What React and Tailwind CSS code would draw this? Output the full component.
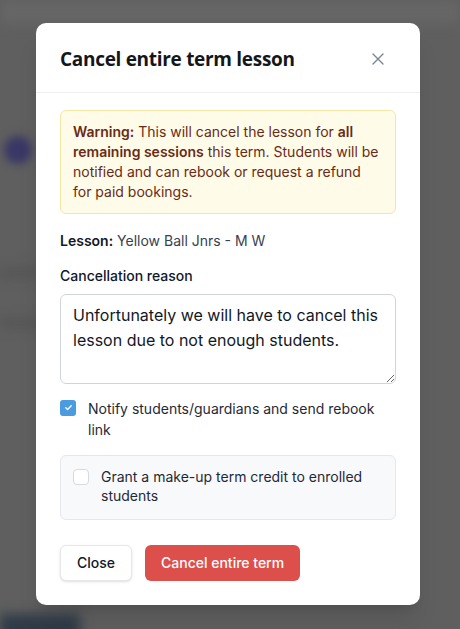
import React, { useState } from "react";

const Backdrop = () => (
  <div className="absolute inset-0 overflow-hidden bg-[#5f5f5f]">
    <div className="h-[24px] bg-[#666666] blur-[6px]" />
    <div className="absolute left-[4px] top-[136px] h-[28px] w-[28px] rounded-full bg-[#3a3766] blur-[4px]" />
    <div className="absolute left-0 top-[268px] h-[10px] w-[40px] bg-[#555555] blur-[6px]" />
    <div className="absolute left-0 top-[318px] h-[10px] w-[40px] bg-[#555555] blur-[6px]" />
    <div className="absolute left-0 top-[614px] h-[30px] w-[80px] bg-[#2f3b48] blur-[6px]" />
  </div>
);

export default function App() {
  const [reason, setReason] = useState(
    "Unfortunately we will have to cancel this lesson due to not enough students."
  );
  const [notify, setNotify] = useState(true);
  const [credit, setCredit] = useState(false);

  return (
    <div className="relative h-[629px] w-[460px] overflow-hidden font-['Inter',sans-serif]">
      <Backdrop />
      <div className="relative flex pl-[36px] pt-[23px]">
        <div className="w-[384px] rounded-[10px] bg-white shadow-xl">
          {/* Header */}
          <div className="flex items-center justify-between border-b border-[#f0f0f0] pl-[24px] pr-[36px] pt-[22px] pb-[18px]">
            <h2 className="text-[19px] font-bold tracking-[-0.3px] text-[#15161a] font-['Open_Sans',sans-serif]">
              Cancel entire term lesson
            </h2>
            <button className="text-[#7a8494]">
              <svg width="12" height="12" viewBox="0 0 12 12" fill="none" stroke="currentColor" strokeWidth="1.4" strokeLinecap="round">
                <path d="M1 1l10 10M11 1L1 11" />
              </svg>
            </button>
          </div>

          {/* Body */}
          <div className="px-[24px] pt-[17px] pb-[24px]">
            <div className="rounded-[6px] border border-[#f6e6a6] bg-[#fefbe9] px-[12px] py-[11px] text-[14px] leading-[20px] text-[#6b2a14]">
              <b className="font-semibold">Warning:</b> This will cancel the lesson for{" "}
              <b className="font-semibold">all remaining sessions</b> this term. Students will be notified and can rebook or request a refund for paid bookings.
            </div>

            <p className="mt-[17px] text-[14px] leading-[20px] text-[#374151]">
              <span className="font-semibold text-[#111827]">Lesson:</span> Yellow Ball Jnrs - M W
            </p>

            <label className="mt-[15px] block text-[14px] font-medium leading-[20px] text-[#111827]">
              Cancellation reason
            </label>
            <textarea
              value={reason}
              onChange={(e) => setReason(e.target.value)}
              className="mt-[8px] block h-[90px] w-full resize-y rounded-[6px] border border-[#d1d5db] px-[12px] py-[8px] text-[16px] leading-[25px] text-[#111827] outline-none"
            />

            <label className="mt-[14px] flex items-start gap-[12px] text-[14px] leading-[21px] text-[#1f2937]">
              <span
                onClick={() => setNotify(!notify)}
                className={`mt-[2px] flex h-[16px] w-[16px] shrink-0 items-center justify-center rounded-[3px] ${notify ? "bg-[#4a9be0]" : "border border-[#d1d5db] bg-white"}`}
              >
                {notify && (
                  <svg width="9" height="9" viewBox="0 0 10 10" fill="none" stroke="white" strokeWidth="1.6" strokeLinecap="round" strokeLinejoin="round">
                    <path d="M2 5.2l2 2L8 3" />
                  </svg>
                )}
              </span>
              <span>Notify students/guardians and send rebook link</span>
            </label>

            <div className="mt-[15px] rounded-[6px] border border-[#e5e7eb] bg-[#f8f9fb] px-[12px] pt-[11px] pb-[14px]">
              <label className="flex items-start gap-[12px] text-[14px] leading-[19px] text-[#1f2937]">
                <span
                  onClick={() => setCredit(!credit)}
                  className={`mt-[2px] flex h-[16px] w-[16px] shrink-0 items-center justify-center rounded-[4px] border ${credit ? "border-[#4a9be0] bg-[#4a9be0]" : "border-[#d6d9de] bg-white"}`}
                />
                <span>Grant a make-up term credit to enrolled students</span>
              </label>
            </div>

            <div className="mt-[25px] flex gap-[13px]">
              <button className="h-[36px] rounded-[6px] border border-[#e5e7eb] bg-white px-[16px] text-[14px] font-medium text-[#111827] shadow-sm">
                Close
              </button>
              <button className="h-[36px] rounded-[6px] bg-[#dc4f4b] px-[16px] text-[14px] font-medium text-white">
                Cancel entire term
              </button>
            </div>
          </div>
        </div>
      </div>
    </div>
  );
}
